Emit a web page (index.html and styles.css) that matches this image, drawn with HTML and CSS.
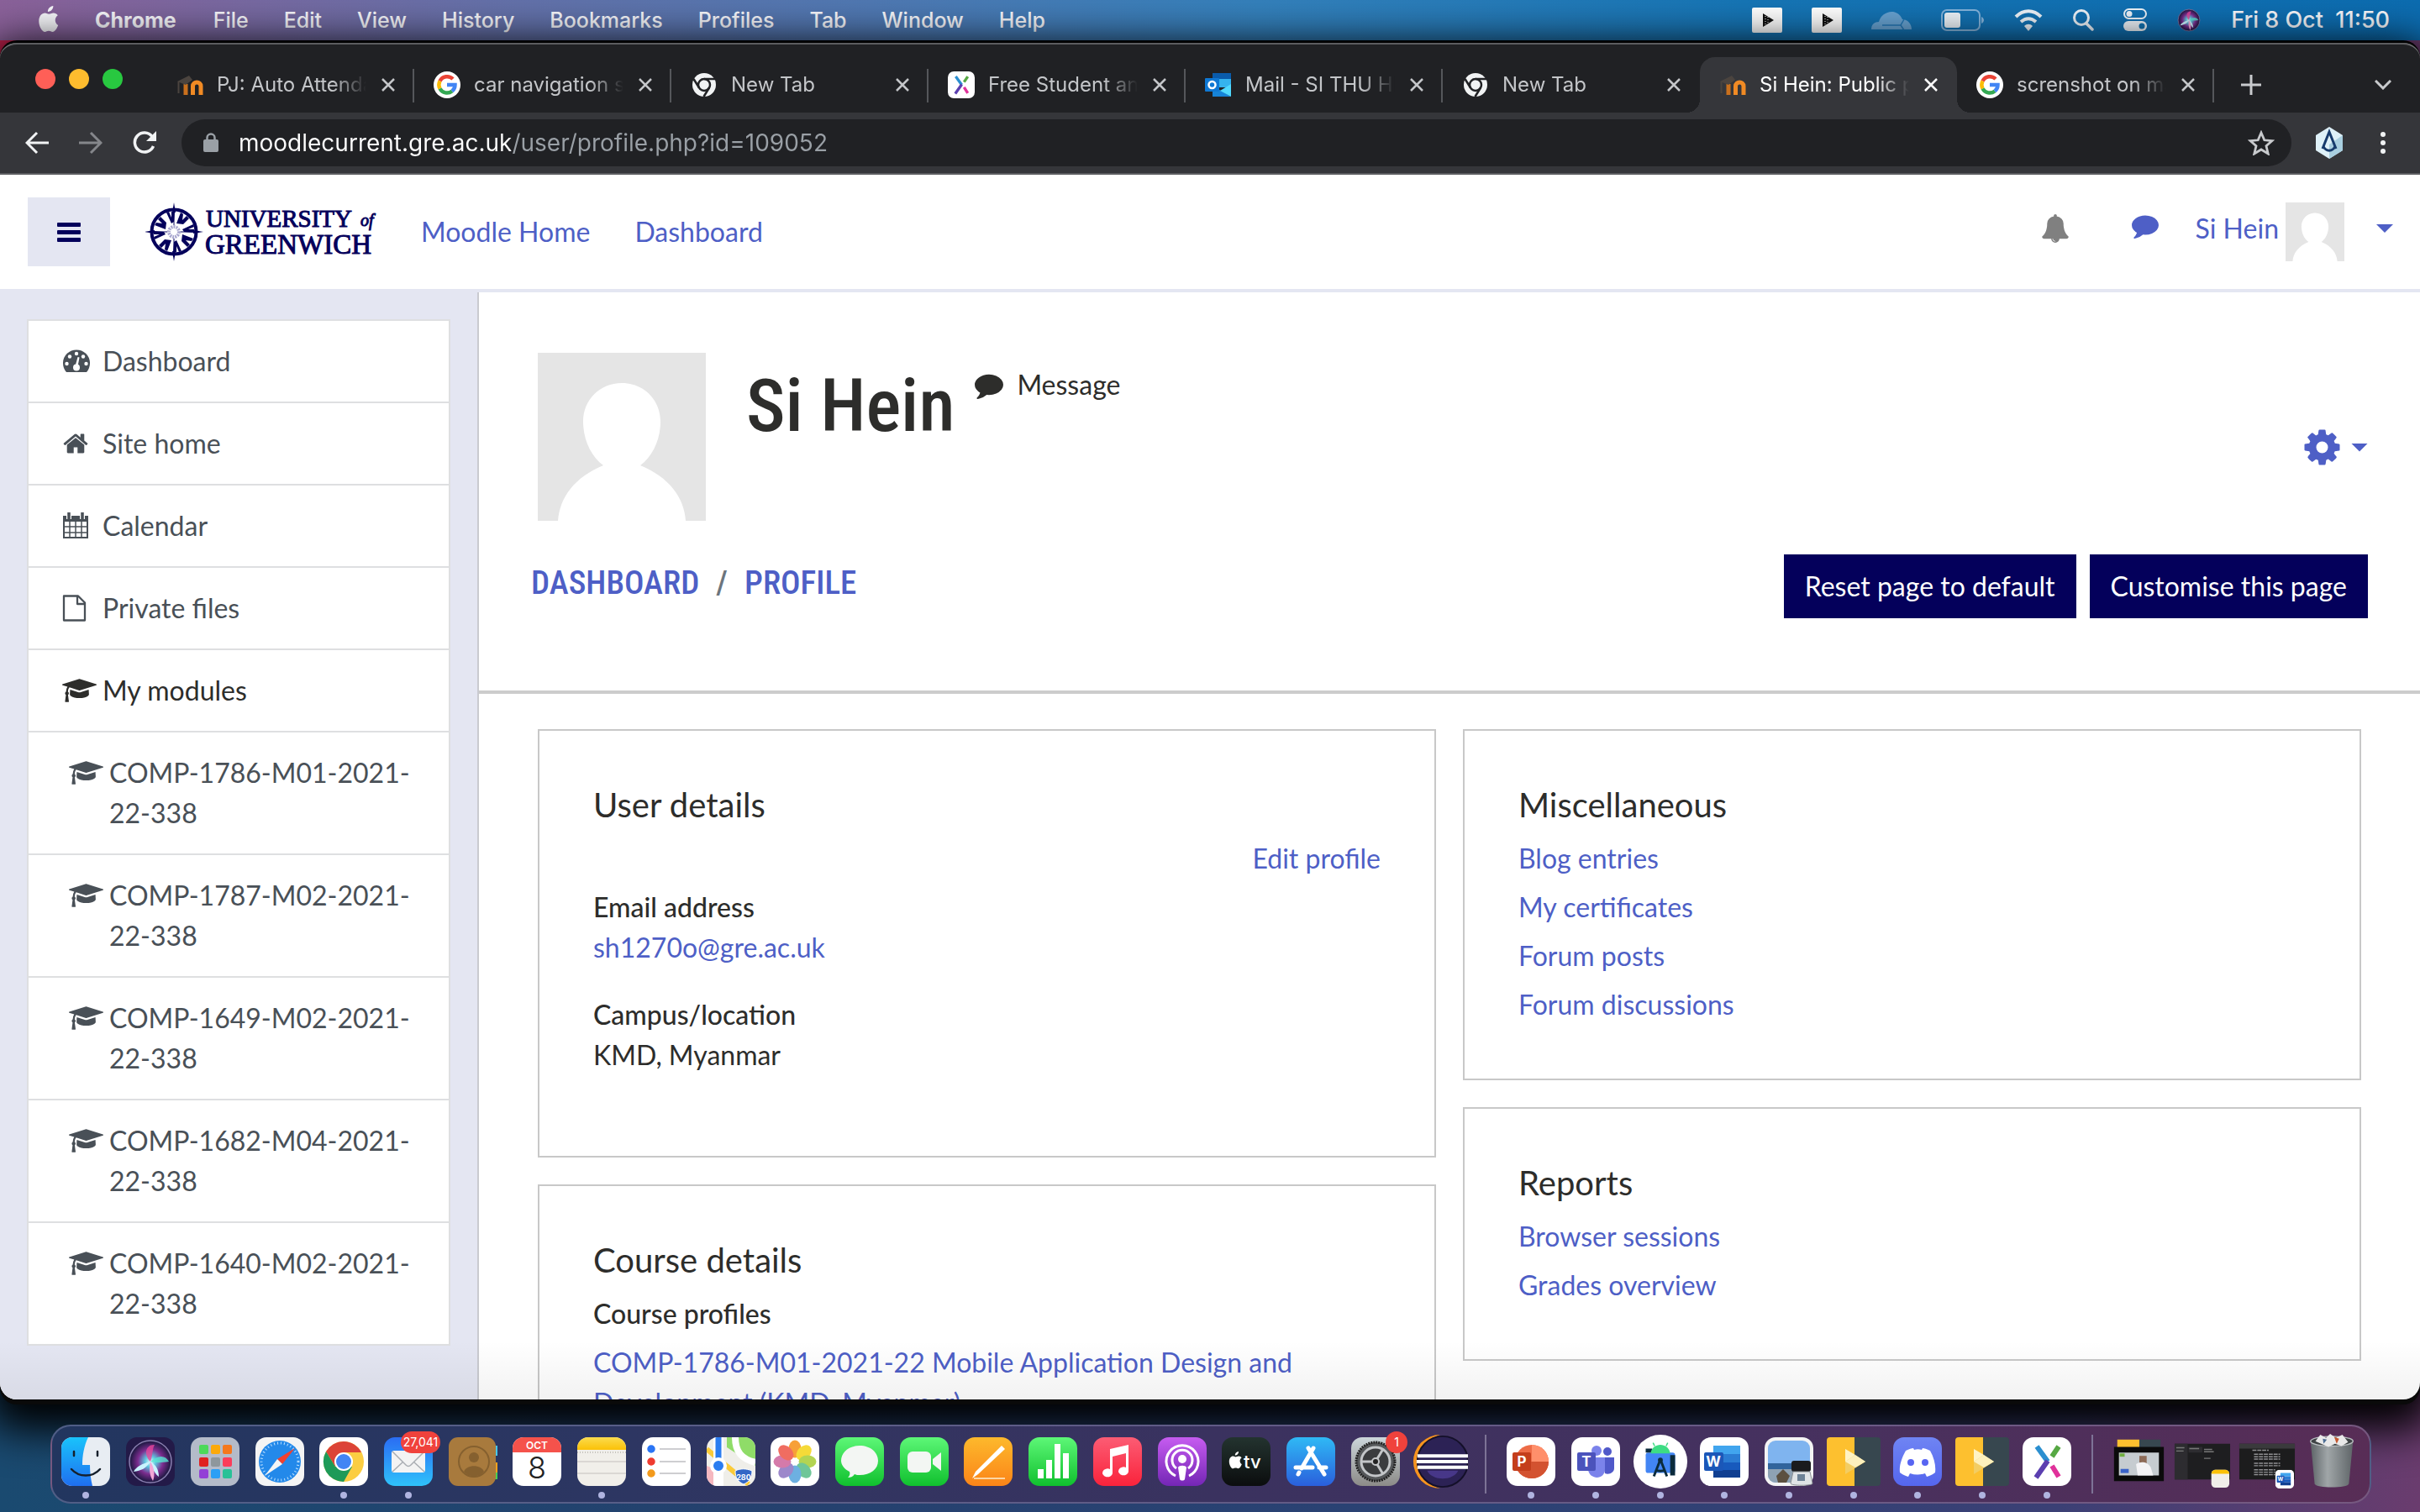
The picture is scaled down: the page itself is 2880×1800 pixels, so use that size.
FILE: index.html
```html
<!DOCTYPE html>
<html lang="en">
<head>
<meta charset="utf-8">
<title>Si Hein: Public profile</title>
<link rel="stylesheet" href="styles.css">
</head>
<body>
<svg class="defs" aria-hidden="true">
  <defs>
    <linearGradient id="g-blue" x1="0" y1="0" x2="0" y2="1"><stop offset="0" stop-color="#19c3fb"/><stop offset="1" stop-color="#1f6ff0"/></linearGradient>
    <linearGradient id="g-mail" x1="0" y1="0" x2="0" y2="1"><stop offset="0" stop-color="#2a6cf3"/><stop offset="1" stop-color="#2fc2fb"/></linearGradient>
    <linearGradient id="g-store" x1="0" y1="0" x2="0" y2="1"><stop offset="0" stop-color="#2fb9f5"/><stop offset="1" stop-color="#2a5fdc"/></linearGradient>
    <linearGradient id="g-green" x1="0" y1="0" x2="0" y2="1"><stop offset="0" stop-color="#5df777"/><stop offset="1" stop-color="#10c02e"/></linearGradient>
    <linearGradient id="g-orange" x1="0" y1="0" x2="0" y2="1"><stop offset="0" stop-color="#fdb92c"/><stop offset="1" stop-color="#fb8418"/></linearGradient>
    <linearGradient id="g-red" x1="0" y1="0" x2="0" y2="1"><stop offset="0" stop-color="#fc5c74"/><stop offset="1" stop-color="#fa233b"/></linearGradient>
    <linearGradient id="g-purple" x1="0" y1="0" x2="0" y2="1"><stop offset="0" stop-color="#c65cf0"/><stop offset="1" stop-color="#7426b5"/></linearGradient>
    <linearGradient id="g-dark" x1="0" y1="0" x2="0" y2="1"><stop offset="0" stop-color="#23332f"/><stop offset="1" stop-color="#0b0d0e"/></linearGradient>
    <linearGradient id="g-gold" x1="0" y1="0" x2="0" y2="1"><stop offset="0" stop-color="#fbdc4e"/><stop offset="1" stop-color="#fbc107"/></linearGradient>
    <linearGradient id="g-grey" x1="0" y1="0" x2="0" y2="1"><stop offset="0" stop-color="#ccd6da"/><stop offset="1" stop-color="#8c8b88"/></linearGradient>
    <linearGradient id="g-discord" x1="0" y1="0" x2="0" y2="1"><stop offset="0" stop-color="#6f84f3"/><stop offset="1" stop-color="#5566ee"/></linearGradient>
    <linearGradient id="g-bin" x1="0" y1="0" x2="1" y2="0"><stop offset="0" stop-color="#5d6467"/><stop offset=".4" stop-color="#a0a6a8"/><stop offset="1" stop-color="#5f6568"/></linearGradient>
    <radialGradient id="g-siri"><stop offset="0" stop-color="#e9fbff"/><stop offset=".25" stop-color="#5fc8e0"/><stop offset=".6" stop-color="#7b2c8e"/><stop offset="1" stop-color="#16173c"/></radialGradient>
    <symbol id="cap" viewBox="0 0 2304 1792"><path d="M1774 836l18 316q4 69-82 128t-235 93.500-323 34.500-323-34.500-235-93.500-82-128l18-316 574 181q22 7 48 7t48-7zm530-324q0 23-22 31l-1120 352q-4 1-10 1t-10-1l-652-206q-43 34-71 111.500t-34 178.500q63 36 63 109 0 69-58 107l58 433q2 14-8 25-9 11-24 11h-192q-15 0-24-11-10-11-8-25l58-433q-58-38-58-107 0-73 65-111 11-207 98-330l-333-104q-22-8-22-31t22-31l1120-352q4-1 10-1t10 1l1120 352q22 8 22 31z"/></symbol>
    <symbol id="comment" viewBox="0 0 1792 1792"><path d="M1792 896q0 174-120 321.500t-326 233-450 85.500q-70 0-145-8-198 175-460 242-49 14-114 22-17 2-30.500-9t-17.500-29v-1q-3-4-.5-12t2-10 4.500-9.500l6-9 7-8.500 8-9q7-8 31-34.500t34.500-38 31-39.500 32.500-51 27-59 26-76q-157-89-247.500-220t-90.500-281q0-130 71-248.500t191-204.500 286-136.500 348-50.500q244 0 450 85.500t326 233 120 321.500z"/></symbol>
    <symbol id="avatar" viewBox="0 0 100 100"><path fill="#e5e5e5" d="M0 0h100v100H0z"/><path fill="#fff" d="M50 18c13 0 23 10 23 23 0 11-5 21-12 26 17 7 26 19 27 33H12c1-14 10-26 27-33-7-5-12-15-12-26 0-13 10-23 23-23z"/></symbol>
    <symbol id="moodle" viewBox="0 0 32 32"><path fill="none" stroke="#f08a24" stroke-width="5" d="M19.500 28V17.500c0-6 9.500-6 9.500 0V28"/><path stroke="#c9701d" stroke-width="5" d="M11 28V15"/><path stroke="#4b443f" stroke-width="2" d="M2.500 26V12"/><path fill="#4b443f" d="M1 12l14-7 4 5-8 6z"/></symbol>
    <symbol id="google" viewBox="0 0 32 32"><circle cx="16" cy="16" r="16" fill="#fff"/><path fill="none" stroke="#ea4335" stroke-width="4.500" d="M7.500 11.500a9.700 9.700 0 0 1 15.500-2.500"/><path fill="none" stroke="#fbbc05" stroke-width="4.500" d="M7.500 20.500a9.700 9.700 0 0 1 0-9"/><path fill="none" stroke="#34a853" stroke-width="4.500" d="M22 23.500a9.700 9.700 0 0 1-14.500-3"/><path fill="none" stroke="#4285f4" stroke-width="4.500" d="M16 16h9.500c0 3-1 5.500-3.500 7.500"/></symbol>
    <symbol id="chromegrey" viewBox="0 0 32 32"><circle cx="16" cy="16" r="14" fill="#f1f3f4"/><circle cx="16" cy="16" r="7" fill="none" stroke="#202124" stroke-width="2.500"/><path fill="none" stroke="#202124" stroke-width="2.500" d="M16 9h13M10 19.500L3.500 9M22 19.500L15.500 30"/></symbol>
    <symbol id="xodo" viewBox="0 0 58 58"><rect width="58" height="58" rx="13" fill="#fff"/><path fill="none" stroke="#2b8fd0" stroke-width="6" d="M17 11l13 18"/><path fill="none" stroke="#5b3fb0" stroke-width="6" d="M30 28L16 48"/><path fill="none" stroke="#56a843" stroke-width="6" d="M43 11l-8 12"/><path fill="none" stroke="#e0319a" stroke-width="6" d="M35 34l8 13"/></symbol>
    <symbol id="close" viewBox="0 0 16 16"><path fill="none" stroke="currentColor" stroke-width="2.500" d="M1 1l14 14M15 1L1 15"/></symbol>
    <symbol id="plex" viewBox="0 0 64 58"><rect width="64" height="58" rx="4" fill="#37474f"/><path fill="#fdc02f" d="M4 0h29v58H4a4 4 0 0 1-4-4V4a4 4 0 0 1 4-4z"/><path fill="#f3cd62" d="M22 14l24 15-24 15z"/><path fill="#fff3c4" d="M22 14l12 7-12 8z"/><path fill="#fdf0bd" d="M34 21l12 8-12 7-12-7z"/></symbol>
    <symbol id="word" viewBox="0 0 58 58"><rect width="58" height="58" rx="13" fill="#fff"/><path fill="#41a5ee" d="M16 10h32v10H16z"/><path fill="#2b7cd3" d="M16 20h32v10H16z"/><path fill="#185abd" d="M16 30h32v9H16z"/><path fill="#103f91" d="M16 39h32v9H16z"/><rect x="5" y="18" width="23" height="22" rx="2" fill="#1b57b8"/><text x="16" y="35" text-anchor="middle" font-size="17" font-weight="700" fill="#fff">W</text></symbol>
    <symbol id="player" viewBox="0 0 36 30"><rect width="36" height="30" rx="2" fill="#fff"/><path fill="#111" d="M13 7l13 8-13 8z"/><path fill="none" stroke="#fff" stroke-dasharray="1 2" d="M16 10v10M19 11v8"/></symbol>
    <symbol id="siri" viewBox="0 0 58 58"><circle cx="29" cy="29" r="25" fill="url(#g-siri)" stroke="#8a7fb0" stroke-width="1.500"/><path fill="#e6469b" opacity=".8" d="M29 29C20 20 24 8 34 9c-3 5-2 12-5 20z"/><path fill="#58e6d2" opacity=".8" d="M29 29c9-8 18-8 22 0-8 1-14 2-22 0z"/><path fill="#c9f4ff" d="M29 29c-9 2-17 6-20 12 9-1 15-4 20-12zM29 29c2 9 6 15 10 18 0-8-3-14-10-18z"/><path fill="#f3a7d6" d="M29 29c-2 8-1 17 3 23 3-8 1-17-3-23z"/></symbol>
    <symbol id="apple" viewBox="0 0 24 30"><path d="M17 0c.3 3.500-2.800 6.700-6 6.500C10.700 3.400 13.700.3 17 0zM22.500 21.500C21 25.500 18.700 29 16.300 29c-1.700 0-2.300-1-4.300-1s-2.700 1-4.300 1C4.500 29 1 22.500 1 17 1 11.500 4.200 8 7.800 8c1.800 0 3.300 1.200 4.400 1.200S15.200 8 17.300 8c1.900 0 3.700 1 4.800 2.600-4 2.600-3.600 8.900.4 10.900z"/></symbol>
  </defs>
</svg>

<header class="menubar">
  <nav class="menus">
    <svg class="apple" width="26" height="32"><use href="#apple"/></svg>
    <button class="menu strong">Chrome</button>
    <button class="menu">File</button>
    <button class="menu">Edit</button>
    <button class="menu">View</button>
    <button class="menu">History</button>
    <button class="menu">Bookmarks</button>
    <button class="menu">Profiles</button>
    <button class="menu">Tab</button>
    <button class="menu">Window</button>
    <button class="menu">Help</button>
  </nav>
  <div class="status">
    <svg width="36" height="30"><use href="#player"/></svg>
    <svg width="36" height="30"><use href="#player"/></svg>
    <svg width="48" height="24" viewBox="0 0 48 24"><path fill="#68a3d2" d="M0 23c0-6 4-9 9-9C12 2 30-4 37 11c6 0 11 5 11 12z"/><path fill="none" stroke="#2377b5" stroke-width="1.500" d="M13 18h22M39 11l-4 7 4 6"/></svg>
    <svg width="52" height="26" viewBox="0 0 52 26"><rect x="1" y="1" width="45" height="24" rx="6" fill="none" stroke="#84b4dc" stroke-width="2"/><rect x="4" y="4" width="19" height="18" rx="3" fill="#eef4fa"/><path fill="#84b4dc" d="M48 9c4 2 4 6 0 8z"/></svg>
    <svg width="34" height="26" viewBox="0 0 34 26"><path fill="none" stroke="#eef4fa" stroke-width="4" d="M2 9c9-9 21-9 30 0M8 15c6-5 12-5 18 0"/><path fill="#eef4fa" d="M12 20c3-3 7-3 10 0l-5 6z"/></svg>
    <svg width="26" height="26" viewBox="0 0 26 26"><circle cx="11" cy="10" r="8.500" fill="none" stroke="#eef4fa" stroke-width="3"/><path stroke="#eef4fa" stroke-width="3.500" stroke-linecap="round" d="M17 17l7 7"/></svg>
    <svg width="28" height="28" viewBox="0 0 28 28"><rect x="1" y="1" width="26" height="11" rx="5.500" fill="none" stroke="#eef4fa" stroke-width="2"/><circle cx="7" cy="6.500" r="3.500" fill="#eef4fa"/><rect y="15" width="28" height="12" rx="6" fill="#eef4fa"/><circle cx="22" cy="21" r="3.500" fill="#1272b1"/></svg>
    <svg width="30" height="30"><use href="#siri"/></svg>
    <span class="clock">Fri 8 Oct&nbsp; 11:50</span>
  </div>
</header>

<div class="window">
  <div class="tabstrip">
    <div class="lights"><i class="light red"></i><i class="light amber"></i><i class="light green"></i></div>
    <div class="tabs">
      <div class="tab"><svg width="32" height="32"><use href="#moodle"/></svg><span class="tab-title">PJ: Auto Attendance</span><button class="close" aria-label="Close"><svg width="16" height="16"><use href="#close"/></svg></button></div>
      <div class="tab"><svg width="32" height="32"><use href="#google"/></svg><span class="tab-title">car navigation system</span><button class="close" aria-label="Close"><svg width="16" height="16"><use href="#close"/></svg></button></div>
      <div class="tab"><svg width="32" height="32"><use href="#chromegrey"/></svg><span class="tab-title">New Tab</span><button class="close" aria-label="Close"><svg width="16" height="16"><use href="#close"/></svg></button></div>
      <div class="tab"><svg width="32" height="32"><use href="#xodo"/></svg><span class="tab-title">Free Student and</span><button class="close" aria-label="Close"><svg width="16" height="16"><use href="#close"/></svg></button></div>
      <div class="tab"><svg width="32" height="32" viewBox="0 0 32 32"><path fill="#0a5bab" d="M9 2h22v10H9z"/><path fill="#35b3ee" d="M9 9h22v10H9z"/><path fill="#1683d8" d="M9 17l22 13H9z"/><path fill="#50d9ff" d="M31 15v15L18 23z"/><rect y="8" width="17" height="16" rx="1" fill="#0f78d4"/><circle cx="8.500" cy="16" r="4" fill="none" stroke="#fff" stroke-width="2.500"/></svg><span class="tab-title">Mail - SI THU HEIN</span><button class="close" aria-label="Close"><svg width="16" height="16"><use href="#close"/></svg></button></div>
      <div class="tab last-plain"><svg width="32" height="32"><use href="#chromegrey"/></svg><span class="tab-title">New Tab</span><button class="close" aria-label="Close"><svg width="16" height="16"><use href="#close"/></svg></button></div>
      <div class="tab active"><svg width="32" height="32"><use href="#moodle"/></svg><span class="tab-title">Si Hein: Public profile</span><button class="close" aria-label="Close"><svg width="16" height="16"><use href="#close"/></svg></button></div>
      <div class="tab"><svg width="32" height="32"><use href="#google"/></svg><span class="tab-title">screnshot on mac</span><button class="close" aria-label="Close"><svg width="16" height="16"><use href="#close"/></svg></button></div>
    </div>
    <button class="new-tab" aria-label="New tab"><svg width="24" height="24" viewBox="0 0 24 24"><path stroke="#c8cacd" stroke-width="3" d="M12 0v24M0 12h24"/></svg></button>
    <button class="tab-search" aria-label="Search tabs"><svg width="20" height="12" viewBox="0 0 20 12"><path fill="none" stroke="#c8cacd" stroke-width="3" d="M1 1l9 9 9-9"/></svg></button>
  </div>

  <div class="toolbar">
    <div class="nav-buttons">
      <button aria-label="Back"><svg width="28" height="28" viewBox="0 0 28 28"><path fill="none" stroke="#f1f3f4" stroke-width="3" d="M28 14H3M14 2L2 14l12 12"/></svg></button>
      <button aria-label="Forward"><svg width="28" height="28" viewBox="0 0 28 28"><path fill="none" stroke="#85878b" stroke-width="3" d="M0 14h25M14 2l12 12-12 12"/></svg></button>
      <button aria-label="Reload"><svg width="28" height="28" viewBox="0 0 28 28"><path fill="none" stroke="#f1f3f4" stroke-width="3.500" d="M24.500 18A11.500 11.500 0 1 1 23 6.500"/><path fill="#f1f3f4" d="M28 0v12H16z"/></svg></button>
    </div>
    <div class="omnibox">
      <svg width="18" height="24" viewBox="0 0 18 24"><rect y="8" width="18" height="15" rx="2" fill="#9aa0a6"/><path fill="none" stroke="#9aa0a6" stroke-width="2.500" d="M4.500 9V6a4.500 4.500 0 0 1 9 0v3"/></svg>
      <input class="url" type="text" aria-label="Address" value="moodlecurrent.gre.ac.uk/user/profile.php?id=109052">
      <button aria-label="Bookmark"><svg width="32" height="30" viewBox="0 0 32 30"><path fill="none" stroke="#c8cacd" stroke-width="2.800" d="M16 3l3.800 8.800 9.200.8-7 6.200 2.200 9.200L16 23l-8.200 5L10 18.800l-7-6.200 9.200-.8z"/></svg></button>
    </div>
    <button aria-label="Extension"><svg width="34" height="40" viewBox="0 0 34 40"><path fill="#dff1f8" d="M17 1l16 10v18L17 39 1 29V11z"/><path fill="#a9cfe0" d="M33 11v18L17 39V22z"/><path fill="none" stroke="#173b6c" stroke-width="3" d="M9 27l8-20 8 20M10 24c3 7 11 7 14 0"/></svg></button>
    <button aria-label="More"><svg width="6" height="28" viewBox="0 0 6 28"><circle cx="3" cy="4" r="3" fill="#f1f3f4"/><circle cx="3" cy="14" r="3" fill="#f1f3f4"/><circle cx="3" cy="24" r="3" fill="#f1f3f4"/></svg></button>
  </div>

  <div class="site">
    <header class="site-header">
      <button class="burger" aria-label="Side panel"><i></i><i></i><i></i></button>
      <a class="logo" href="#" aria-label="University of Greenwich">
        <svg width="276" height="72" viewBox="0 0 276 72">
          <g fill="#04005b" transform="translate(34 36)">
            <circle r="26.500" fill="none" stroke="#04005b" stroke-width="4"/>
            <path d="M0-35l2 12h-4zM0 35l2-12h-4zM-35 0l12 2v-4zM35 0l-12 2v-4z"/>
            <path stroke="#04005b" d="M0-30v22M0 30V8M-30 0h22M30 0H8"/>
            <g id="ray"><path d="M3-10l5-13 3 2-1 7 5-5 3 3-7 7zM10-3l13-6 1 3-7 3 7 0v4l-12-1z"/></g>
            <use href="#ray" transform="rotate(90)"/><use href="#ray" transform="rotate(180)"/><use href="#ray" transform="rotate(270)"/>
            <circle r="6" fill="#fff" stroke="#a9a7cf" stroke-width="4" stroke-dasharray="2 1"/>
          </g>
          <text class="logo-text" x="72" y="30" font-size="29">UNIVERSITY</text>
          <text class="logo-text logo-of" x="256" y="29" font-size="20">of</text>
          <text class="logo-text" x="71" y="62" font-size="33">GREENWICH</text>
        </svg>
      </a>
      <nav class="site-nav"><a href="#">Moodle Home</a><a href="#">Dashboard</a></nav>
      <div class="user-area">
        <button class="bell" aria-label="Notifications"><svg width="34" height="34" viewBox="0 0 1792 1792"><path fill="#808080" d="M912 1696q0-16-16-16-59 0-101.500-42.500t-42.500-101.500q0-16-16-16t-16 16q0 73 51.500 124.500t124.500 51.500q16 0 16-16zm816-288q0 52-38 90t-90 38h-448q0 106-75 181t-181 75-181-75-75-181h-448q-52 0-90-38t-38-90q50-42 91-88t85-119.500 74.500-158.500 50-206 19.500-260q0-152 117-282.500t307-158.500q-8-19-8-39 0-40 28-68t68-28 68 28 28 68q0 20-8 39 190 28 307 158.500t117 282.500q0 139 19.500 260t50 206 74.500 158.500 85 119.500 91 88z"/></svg></button>
        <button class="chat" aria-label="Messages"><svg width="32" height="32"><use href="#comment"/></svg></button>
        <a class="user-link" href="#">Si Hein<svg width="70" height="70"><use href="#avatar"/></svg></a>
        <button class="caret" aria-label="User menu"></button>
      </div>
    </header>

    <div class="site-body">
      <aside class="drawer">
        <nav class="drawer-list">
          <a href="#"><svg width="34" height="32" viewBox="0 0 34 32"><path d="M5 29a16 16 0 1 1 24 0z"/><g fill="#fff"><circle cx="5.500" cy="19" r="2.200"/><circle cx="9" cy="10.500" r="2.200"/><circle cx="17" cy="7" r="2.200"/><circle cx="25" cy="10.500" r="2.200"/><circle cx="28.500" cy="19" r="2.200"/><circle cx="17" cy="23.500" r="4"/><path d="M15.500 22l3-11 2 .5-2 11z"/></g></svg><span>Dashboard</span></a>
          <a href="#"><svg width="32" height="32" viewBox="0 0 1792 1792"><path d="M1472 992v480q0 26-19 45t-45 19h-384v-384h-256v384h-384q-26 0-45-19t-19-45v-480q0-1 .5-3t.5-3l575-474 575 474q1 2 1 6zm223-69l-62 74q-8 9-21 11h-3q-13 0-21-7l-692-577-692 577q-12 8-24 7-13-2-21-11l-62-74q-8-10-7-23.500t11-21.500l719-599q32-26 76-26t76 26l244 204v-195q0-14 9-23t23-9h192q14 0 23 9t9 23v408l219 182q10 8 11 21.500t-7 23.500z"/></svg><span>Site home</span></a>
          <a href="#"><svg width="32" height="32" viewBox="0 0 32 32"><path fill="none" stroke="currentColor" stroke-width="2" d="M2 6h28v24H2z"/><path d="M1 4h30v7H1z"/><path fill="none" stroke="currentColor" stroke-width="1.500" d="M9 11v19M16 11v19M23 11v19M2 17h28M2 24h28"/><path stroke="#fff" stroke-width="6" d="M8 2v6M24 2v6"/><path stroke="currentColor" stroke-width="3.500" d="M8 0v8M24 0v8"/></svg><span>Calendar</span></a>
          <a href="#"><svg width="30" height="32" viewBox="0 0 30 32"><path fill="none" stroke="currentColor" stroke-width="2.300" stroke-linejoin="round" d="M2 1.500h17l8 8v21H2zM18 1.500V11h9"/></svg><span>Private files</span></a>
          <a class="current" href="#"><svg width="41" height="32"><use href="#cap"/></svg><span>My modules</span></a>
          <a class="module" href="#"><svg width="41" height="32"><use href="#cap"/></svg><span>COMP-1786-M01-2021-22-338</span></a>
          <a class="module" href="#"><svg width="41" height="32"><use href="#cap"/></svg><span>COMP-1787-M02-2021-22-338</span></a>
          <a class="module" href="#"><svg width="41" height="32"><use href="#cap"/></svg><span>COMP-1649-M02-2021-22-338</span></a>
          <a class="module" href="#"><svg width="41" height="32"><use href="#cap"/></svg><span>COMP-1682-M04-2021-22-338</span></a>
          <a class="module" href="#"><svg width="41" height="32"><use href="#cap"/></svg><span>COMP-1640-M02-2021-22-338</span></a>
        </nav>
      </aside>

      <main class="main">
        <section class="profile-head">
          <div class="profile-row">
            <svg class="portrait" width="200" height="200"><use href="#avatar"/></svg>
            <h1>Si Hein</h1>
            <a class="message" href="#"><svg width="34" height="34"><use href="#comment"/></svg>Message</a>
            <button class="gear" aria-label="Actions"><svg width="49" height="49" viewBox="0 0 1792 1792"><path d="M1152 896q0-106-75-181t-181-75-181 75-75 181 75 181 181 75 181-75 75-181zm512-109v222q0 12-8 23t-20 13l-185 28q-19 54-39 91 35 50 107 138 10 12 10 25t-9 23q-27 37-99 108t-94 71q-12 0-26-9l-138-108q-44 23-91 38-16 136-29 186-7 28-36 28h-222q-14 0-24.500-8.500t-11.500-21.500l-28-184q-49-16-90-37l-141 107q-10 9-25 9-14 0-25-11-126-114-165-168-7-10-7-23 0-12 8-23 15-21 51-66.500t54-70.500q-27-50-41-99l-183-27q-13-2-21-12.500t-8-23.500v-222q0-12 8-23t19-13l186-28q14-46 39-92-40-57-107-138-10-12-10-24 0-10 9-23 26-36 98.500-107.500t94.500-71.500q13 0 26 10l138 107q44-23 91-38 16-136 29-186 7-28 36-28h222q14 0 24.500 8.500t11.500 21.500l28 184q49 16 90 37l142-107q9-9 24-9 13 0 25 10 129 119 165 170 7 8 7 22 0 12-8 23-15 21-51 66.500t-54 70.500q26 50 41 98l183 28q13 2 21 12.500t8 23.500z"/></svg><i class="caret"></i></button>
          </div>
          <div class="crumb-row">
            <nav class="crumbs"><a href="#">DASHBOARD</a><span>/</span><a href="#">PROFILE</a></nav>
            <div class="actions"><button class="btn">Reset page to default</button><button class="btn">Customise this page</button></div>
          </div>
        </section>
        <div class="cards">
          <div class="col">
            <section class="card">
              <h2>User details</h2>
              <a class="edit" href="#">Edit profile</a>
              <dl><dt>Email address</dt><dd><a href="#">sh1270o@gre.ac.uk</a></dd></dl>
              <dl><dt>Campus/location</dt><dd>KMD, Myanmar</dd></dl>
            </section>
            <section class="card">
              <h2>Course details</h2>
              <dl class="spaced"><dt>Course profiles</dt><dd><a href="#">COMP-1786-M01-2021-22 Mobile Application Design and Development (KMD, Myanmar)</a></dd></dl>
            </section>
          </div>
          <div class="col">
            <section class="card">
              <h2>Miscellaneous</h2>
              <ul><li><a href="#">Blog entries</a></li><li><a href="#">My certificates</a></li><li><a href="#">Forum posts</a></li><li><a href="#">Forum discussions</a></li></ul>
            </section>
            <section class="card">
              <h2>Reports</h2>
              <ul><li><a href="#">Browser sessions</a></li><li><a href="#">Grades overview</a></li></ul>
            </section>
          </div>
        </div>
      </main>
    </div>
  </div>
</div>

<footer class="dock">
  <button class="app running" aria-label="Finder"><svg viewBox="0 0 58 58"><rect width="58" height="58" rx="13" fill="#e8edf3"/><path fill="url(#g-blue)" d="M13 0h19c-5 10-7 22-7 33h9c0 9 1 17 3 25H13A13 13 0 0 1 0 45V13A13 13 0 0 1 13 0z"/><path fill="none" stroke="#16202c" stroke-width="2.500" stroke-linecap="round" d="M15 17v5M43 17v5M12 38c9 10 25 10 34 0"/></svg></button>
  <button class="app" aria-label="Siri"><svg viewBox="0 0 58 58"><rect width="58" height="58" rx="13" fill="#231a48"/><use href="#siri"/></svg></button>
  <button class="app" aria-label="Launchpad"><svg viewBox="0 0 58 58"><rect width="58" height="58" rx="13" fill="#b4bbc9"/><g><rect x="10" y="9" width="11" height="11" rx="2" fill="#4cd95a"/><rect x="24" y="9" width="11" height="11" rx="2" fill="#fba90b"/><rect x="38" y="9" width="11" height="11" rx="2" fill="#f5781d"/><rect x="10" y="24" width="11" height="11" rx="2" fill="#e02020"/><rect x="24" y="24" width="11" height="11" rx="2" fill="#8e979c"/><rect x="38" y="24" width="11" height="11" rx="2" fill="#fb3d5a"/><rect x="10" y="38" width="11" height="11" rx="2" fill="#9341d6"/><rect x="24" y="38" width="11" height="11" rx="2" fill="#2b9ff5"/><rect x="38" y="38" width="11" height="11" rx="2" fill="#29c197"/></g></svg></button>
  <button class="app" aria-label="Safari"><svg viewBox="0 0 58 58"><rect width="58" height="58" rx="13" fill="#f4f4f4"/><circle cx="29" cy="29" r="25" fill="#2389ea"/><circle cx="29" cy="29" r="22" fill="none" stroke="#bfe2ff" stroke-width="3" stroke-dasharray="1 3"/><path fill="#f2402f" d="M47 13L26 26l6 6z"/><path fill="#f5f5f5" d="M11 46l15-20 6 6z"/></svg></button>
  <button class="app running" aria-label="Chrome"><svg viewBox="0 0 58 58"><rect width="58" height="58" rx="13" fill="#fff"/><circle cx="29" cy="29" r="24" fill="#fbcd42"/><path fill="#dc4437" d="M29 5a24 24 0 0 1 21 13H29L19 35 8 17A24 24 0 0 1 29 5z"/><path fill="#1d9a58" d="M8 17l11 18 20 0-10 18A24 24 0 0 1 8 17z"/><circle cx="29" cy="29" r="11" fill="#fff"/><circle cx="29" cy="29" r="9" fill="#4285f4"/></svg></button>
  <button class="app running" aria-label="Mail"><svg viewBox="0 0 58 58"><rect width="58" height="58" rx="13" fill="url(#g-mail)"/><rect x="9" y="16" width="40" height="26" rx="3" fill="#f3f3f3"/><path fill="none" stroke="#a9adb2" stroke-width="1.500" d="M10 17l16 16c2 2 4 2 6 0l16-16M10 41l13-12M48 41L35 29"/></svg><span class="badge">27,041</span></button>
  <button class="app" aria-label="Contacts"><svg viewBox="0 0 58 58"><path fill="#48c7e8" d="M52 10h6v12h-6z"/><path fill="#f5a11d" d="M52 30h6v12h-6z"/><path fill="#4bcf52" d="M52 42h6v8h-6z"/><rect width="56" height="58" rx="11" fill="#a87a3d"/><circle cx="30" cy="29" r="18" fill="none" stroke="#85602f" stroke-width="2"/><circle cx="30" cy="24" r="6" fill="#85602f"/><path fill="#85602f" d="M18 41c3-9 21-9 24 0-6 7-18 7-24 0z"/></svg></button>
  <button class="app" aria-label="Calendar"><svg viewBox="0 0 58 58"><rect width="58" height="58" rx="13" fill="#fff"/><path fill="#f5524b" d="M13 0h32a13 13 0 0 1 13 13v5H0v-5A13 13 0 0 1 13 0z"/><text x="29" y="14" text-anchor="middle" font-size="12" font-weight="600" fill="#fff">OCT</text><text x="29" y="49" text-anchor="middle" font-size="36" font-weight="300" fill="#222">8</text></svg></button>
  <button class="app running" aria-label="Notes"><svg viewBox="0 0 58 58"><rect width="58" height="58" rx="13" fill="#f1efea"/><path fill="url(#g-gold)" d="M13 0h32a13 13 0 0 1 13 13v2H0v-2A13 13 0 0 1 13 0z"/><path stroke="#d2d0cb" stroke-width="1.500" d="M0 29h58M0 43h58"/><path stroke="#9b9890" stroke-dasharray="1 2" d="M0 18h58"/></svg></button>
  <button class="app" aria-label="Reminders"><svg viewBox="0 0 58 58"><rect width="58" height="58" rx="13" fill="#fff"/><g stroke-width="1.500"><circle cx="11" cy="14" r="4" fill="#2a75f5" stroke="#2a75f5"/><circle cx="11" cy="29" r="4" fill="#ef3b30" stroke="#ef3b30"/><circle cx="11" cy="43" r="4" fill="#f39a1c" stroke="#f39a1c"/><path stroke="#bfbfc2" d="M21 14h31M21 29h31M21 43h31"/></g></svg></button>
  <button class="app" aria-label="Maps"><svg viewBox="0 0 58 58"><clipPath id="maps-clip"><rect width="58" height="58" rx="13"/></clipPath><g clip-path="url(#maps-clip)"><rect width="58" height="58" fill="#efeee9"/><path fill="#8fdc68" d="M24 0h34v34L24 12z"/><path fill="none" stroke="#fff" stroke-width="8" d="M34 0c0 18 8 26 24 30"/><path fill="#f5b8c0" d="M0 34l10 4v20H0z"/><path fill="none" stroke="#fbcb38" stroke-width="6" d="M0 14l50 42"/><path stroke="#fff" stroke-width="12" d="M14 0v58"/><path stroke="#2b7df0" stroke-width="7" d="M14 0v32"/><circle cx="14" cy="34" r="8" fill="#2b7df0" stroke="#fff" stroke-width="4"/></g><path fill="#3367c6" stroke="#fff" d="M34 40c6-3 13-3 20 0 0 8-3 13-10 16-7-3-10-8-10-16z"/><text x="44" y="51" text-anchor="middle" font-size="9" font-weight="700" fill="#fff">280</text></svg></button>
  <button class="app" aria-label="Photos"><svg viewBox="0 0 58 58"><rect width="58" height="58" rx="13" fill="#fff"/><g transform="translate(29 29)" opacity=".88"><ellipse cy="-15" rx="7.500" ry="10.500" fill="#f7941d"/><ellipse cy="-15" rx="7.500" ry="10.500" fill="#f5d51d" transform="rotate(45)"/><ellipse cy="-15" rx="7.500" ry="10.500" fill="#a9cf3b" transform="rotate(90)"/><ellipse cy="-15" rx="7.500" ry="10.500" fill="#5cbf8a" transform="rotate(135)"/><ellipse cy="-15" rx="7.500" ry="10.500" fill="#5aa6dd" transform="rotate(180)"/><ellipse cy="-15" rx="7.500" ry="10.500" fill="#8f78c4" transform="rotate(225)"/><ellipse cy="-15" rx="7.500" ry="10.500" fill="#d0689f" transform="rotate(270)"/><ellipse cy="-15" rx="7.500" ry="10.500" fill="#ef5a4c" transform="rotate(315)"/></g></svg></button>
  <button class="app" aria-label="Messages"><svg viewBox="0 0 58 58"><rect width="58" height="58" rx="13" fill="url(#g-green)"/><path fill="#f3f6f3" d="M29 10c13 0 22 8 22 18s-9 17-22 17c-2 0-4 0-6-1-2 3-5 4-8 4 2-2 3-4 2-7-6-3-10-8-10-13 0-10 9-18 22-18z"/></svg></button>
  <button class="app" aria-label="FaceTime"><svg viewBox="0 0 58 58"><rect width="58" height="58" rx="13" fill="url(#g-green)"/><rect x="9" y="17" width="28" height="25" rx="6" fill="#f3f6f3"/><path fill="#f3f6f3" d="M39 26l10-8v22l-10-8z"/></svg></button>
  <button class="app" aria-label="Pages"><svg viewBox="0 0 58 58"><rect width="58" height="58" rx="13" fill="url(#g-orange)"/><path fill="#fff" d="M45 10l4 4-32 30-7 5 4-8z"/><path stroke="#fcd6a4" stroke-width="2" d="M12 49h37"/></svg></button>
  <button class="app" aria-label="Numbers"><svg viewBox="0 0 58 58"><rect width="58" height="58" rx="13" fill="url(#g-green)"/><path fill="#fff" d="M11 38h7v11h-7zM21 27h7v22h-7zM31 8h7v41h-7zM41 19h7v30h-7z"/></svg></button>
  <button class="app" aria-label="Music"><svg viewBox="0 0 58 58"><rect width="58" height="58" rx="13" fill="url(#g-red)"/><path fill="#fff" d="M20 14l22-5v32a6 5 0 1 1-3-5V19l-16 4v20a6 5 0 1 1-3-5z"/></svg></button>
  <button class="app" aria-label="Podcasts"><svg viewBox="0 0 58 58"><rect width="58" height="58" rx="13" fill="url(#g-purple)"/><g fill="none" stroke="#fff" stroke-width="3"><path d="M21 46a19 19 0 1 1 16 0M22 37a12 12 0 1 1 14 0"/></g><circle cx="29" cy="26" r="5" fill="#fff"/><path fill="#fff" d="M24 36c1-3 9-3 10 0l-2 14c-1 2-5 2-6 0z"/></svg></button>
  <button class="app" aria-label="TV"><svg viewBox="0 0 58 58"><rect width="58" height="58" rx="13" fill="url(#g-dark)"/><use href="#apple" x="8" y="17" width="17" height="21" fill="#fff"/><text x="26" y="37" font-size="22" font-weight="500" fill="#fff">tv</text></svg></button>
  <button class="app" aria-label="App Store"><svg viewBox="0 0 58 58"><rect width="58" height="58" rx="13" fill="url(#g-store)"/><path fill="none" stroke="#fff" stroke-width="5" stroke-linecap="round" d="M32 13L18 37M26 13l19 31M11 36h20M39 36h8M15 42l-1 2"/></svg></button>
  <button class="app" aria-label="System Preferences"><svg viewBox="0 0 58 58"><rect width="58" height="58" rx="13" fill="url(#g-grey)"/><circle cx="29" cy="29" r="23" fill="#55585a" stroke="#222" stroke-width="3" stroke-dasharray="2 1"/><circle cx="29" cy="29" r="17" fill="#3a3c3e" stroke="#c3c6c8" stroke-width="3"/><path stroke="#c3c6c8" stroke-width="3" d="M29 29H12M29 29l9-15M29 29l9 15"/><circle cx="29" cy="29" r="4" fill="#222" stroke="#c3c6c8" stroke-width="2"/></svg><span class="badge round">1</span></button>
  <button class="app" aria-label="Eclipse"><svg class="large" viewBox="0 0 70 66"><path fill="#f7941e" d="M36 0a33 33 0 0 0 0 66C16 60 12 44 12 33S18 6 36 0z"/><circle cx="39" cy="33" r="31" fill="#2c2255" stroke="#141029" stroke-width="2"/><path fill="#fff" d="M8 24h62v4H8zM7 31h63v4H7zM8 38h62v4H8z"/><path fill="#473788" d="M20 44h38c-6 13-32 13-38 0z"/></svg></button>
  <i class="divider"></i>
  <button class="app running" aria-label="PowerPoint"><svg viewBox="0 0 58 58"><rect width="58" height="58" rx="13" fill="#fff"/><circle cx="30" cy="29" r="20" fill="#ed6c47"/><path fill="#ff8f6b" d="M30 9a20 20 0 0 1 20 20H30z"/><path fill="#d35230" d="M50 29a20 20 0 0 1-40 0z"/><rect x="7" y="18" width="22" height="22" rx="2" fill="#c43e1c"/><text x="18" y="35" text-anchor="middle" font-size="17" font-weight="700" fill="#fff">P</text></svg></button>
  <button class="app running" aria-label="Teams"><svg viewBox="0 0 58 58"><rect width="58" height="58" rx="13" fill="#fff"/><circle cx="30" cy="16" r="6" fill="#7b83eb"/><circle cx="43" cy="17" r="5" fill="#5059c9"/><path fill="#5059c9" d="M36 24h15v13c0 5-6 8-11 6z"/><path fill="#7b83eb" d="M20 24h20v14c0 13-18 13-20 1z"/><rect x="7" y="18" width="22" height="22" rx="2" fill="#4b53bc"/><text x="18" y="35" text-anchor="middle" font-size="17" font-weight="700" fill="#fff">T</text></svg></button>
  <button class="app running" aria-label="Android Studio"><svg class="large" viewBox="0 0 70 66"><circle cx="35" cy="33" r="33" fill="#fff"/><rect x="17" y="22" width="36" height="25" rx="3" fill="#4285f4"/><path fill="#0b2b3c" d="M17 17h8v5h-8zM47 25h6v25h-6z"/><path fill="#3ddc84" d="M23 23c2-14 22-14 24 0z"/><path stroke="#3ddc84" stroke-width="1.500" d="M28 14l-2-4M42 14l2-4"/><path fill="none" stroke="#0b2b3c" stroke-width="3" d="M27 51l7-18h2l7 18M29 43c4 2 8 2 12 0"/><circle cx="35" cy="31" r="3" fill="#0b2b3c"/></svg></button>
  <button class="app running" aria-label="Word"><svg><use href="#word"/></svg></button>
  <button class="app running" aria-label="Preview"><svg viewBox="0 0 58 58"><rect width="58" height="58" rx="13" fill="#f4f4f4"/><rect x="4" y="4" width="50" height="50" rx="9" fill="#7fb4ef"/><path fill="#31649c" d="M4 31h50v8H4z"/><path fill="#8ea2b4" d="M4 38h50v7a9 9 0 0 1-9 9H13a9 9 0 0 1-9-9z"/><path fill="#5c5040" d="M14 46l8-8 8 8-4 8H16z"/><rect x="32" y="28" width="23" height="13" rx="3" fill="#1a1b1d"/><path fill="#dfe4e6" stroke="#8b9194" d="M34 41h20l3 14c0 3-26 3-26 0z"/><path fill="#6c8296" d="M39 44h9v8h-9z"/></svg></button>
  <button class="app running" aria-label="Player"><svg class="wide" viewBox="0 0 64 58"><use href="#plex"/></svg></button>
  <button class="app running" aria-label="Discord"><svg viewBox="0 0 58 58"><rect width="58" height="58" rx="13" fill="url(#g-discord)"/><path fill="#fff" d="M15 16c4-2 7-3 9-3l1 2c3-1 6-1 9 0l1-2c2 0 5 1 9 3 5 9 7 18 6 26-4 3-7 4-10 5l-2-4c-6 2-12 2-18 0l-2 4c-3-1-6-2-10-5-1-8 2-17 7-26z"/><circle cx="21" cy="30" r="4" fill="#5865f2"/><circle cx="38" cy="30" r="4" fill="#5865f2"/></svg></button>
  <button class="app running" aria-label="Player"><svg class="wide" viewBox="0 0 64 58"><use href="#plex"/></svg></button>
  <button class="app running" aria-label="Xodo"><svg><use href="#xodo"/></svg></button>
  <i class="divider"></i>
  <button class="app" aria-label="Player window"><svg class="large" viewBox="0 0 70 66"><path fill="#fdc02f" d="M9 6h27v12H9z"/><path fill="#37474f" d="M36 6h26v12H36z"/><path fill="#0b0b0b" d="M5 15h61v42H5z"/><path fill="#c6ccd0" d="M11 22h49v28H11z"/><path fill="#8d6b57" d="M36 26h9v9h-9z"/><path fill="#f3f3f5" d="M32 36c6-4 14-3 18 4l3 10H34z"/><path fill="#3a63c8" d="M13 42h10v5H13z"/><path fill="#6fae3d" d="M12 23h6v4h-6z"/></svg></button>
  <button class="app" aria-label="Notes window"><svg class="large" viewBox="0 0 70 66"><path fill="#1e1e20" d="M1 11h68v44H1z"/><path fill="#2d2c30" d="M1 11h16v44H1zM18 15h17v7H18z"/><path stroke="#777" stroke-width="1.500" d="M3 16h10M3 20h9M19 17h12M37 18h10M37 21h12M37 29h8"/><rect x="46" y="43" width="22" height="22" rx="5" fill="#f1efea"/><path fill="#fbc107" d="M51 43h12a5 5 0 0 1 5 5H46a5 5 0 0 1 5-5z"/></svg></button>
  <button class="app" aria-label="Word window"><svg class="large" viewBox="0 0 70 66"><path fill="#1c1c1d" d="M1 11h68v44H1z"/><path fill="#3a3a3c" d="M1 11h68v6H1z"/><path stroke="#8f8f92" stroke-width="1.500" stroke-dasharray="5 1" d="M17 19h20M19 24h32M19 27h32M19 30h32M19 35h32M19 38h32M19 43h26M19 46h26M19 49h26"/><use href="#word" x="45" y="43" width="23" height="23"/></svg></button>
  <button class="app" aria-label="Bin"><svg class="large" viewBox="0 0 70 66"><path fill="url(#g-bin)" d="M9 8h52l-5 52c-1 6-41 6-42 0z"/><ellipse cx="35" cy="8" rx="26" ry="6" fill="#3f4446" stroke="#b9bec0" stroke-width="1.500"/><path fill="#e9e9e9" d="M15 8l6-8 7 4 5-5 7 5 8-4 7 9-8 5-8-3-8 4-9-4z"/><path fill="#c4572e" d="M38 3l6 2-3 6z"/><path fill="#4a6c93" d="M24 5l5 1-4 5z"/></svg></button>
</footer>
</body>
</html>
```
FILE: styles.css
```css
* { box-sizing: border-box; }

body {
  margin: 0;
  height: 100vh;
  overflow: hidden;
  display: grid;
  grid-template-rows: 48px minmax(0, 1fr) auto;
  font-family: Lato, "Open Sans", sans-serif;
  font-size: 32px;
  line-height: 48px;
  color: #2d2d2b;
  background:
    linear-gradient(90deg, #c3224e 0, #c3224e 20%, transparent 40%) 0 48px / 100% 40px no-repeat,
    linear-gradient(90deg, #1a4a70, #24416e 30%, #2b4274 60%, #3b4075 85%, #6a3c6e);
}

button {
  border: 0;
  padding: 0;
  background: none;
  color: inherit;
  font: inherit;
  display: flex;
  align-items: center;
}

a { color: #4e5fc6; text-decoration: none; }
svg { display: block; flex: none; fill: currentColor; }
.defs { position: absolute; width: 0; height: 0; }

/* System menu bar */
.menubar {
  display: flex;
  align-items: center;
  justify-content: space-between;
  padding: 0 36px 0 45px;
  font-family: Inter, sans-serif;
  font-size: 25px;
  font-weight: 500;
  line-height: 32px;
  color: #f8f8fc;
  background: linear-gradient(90deg, #8a6199, #6570a8 20%, #4f78b2 36%, #3480bb 52%, #1675b5 72%, #0c6cb0);
}
.menus, .status { display: flex; align-items: center; }
.menus { gap: 42px; }
.menus svg { margin-top: -3px; }
.menus .strong { font-weight: 700; margin-right: 2px; }
.status { gap: 35px; }
.clock { white-space: nowrap; font-size: 27px; }

/* Browser window */
.window {
  display: flex;
  flex-direction: column;
  overflow: hidden;
  border: 2px solid #000;
  border-width: 3px 0 0;
  border-radius: 20px;
  background: #202124;
  box-shadow: inset 0 2px 0 #6a6b6e, 0 6px 0 #0a0a0a, 0 20px 50px 16px #000;
  position: relative;
}
.tabstrip {
  flex: none;
  display: flex;
  height: 83px;
  padding: 15px 34px 0 42px;
  font-family: Inter, sans-serif;
  font-size: 24px;
  line-height: 32px;
  color: #c4c6c9;
  border-top: 2px solid #5c5d60;
}
.lights { display: flex; gap: 16px; width: 145px; padding-top: 14px; }
.light { width: 24px; height: 24px; border-radius: 50%; }
.red { background: #ff5f57; }
.amber { background: #febc2e; }
.green { background: #28c840; }
.tabs { display: flex; flex: 0 1 2448px; min-width: 0; }
.tab {
  position: relative;
  flex: 1 1 306px;
  min-width: 0;
  display: flex;
  align-items: center;
  padding: 0 23px;
}
.tab::after {
  content: "";
  position: absolute;
  right: 0;
  top: 14px;
  width: 2px;
  height: 40px;
  background: #55575b;
}
.tab.last-plain::after { display: none; }
.tab-title {
  flex: 1;
  min-width: 0;
  margin: 0 18px 0 16px;
  overflow: hidden;
  white-space: nowrap;
  mask-image: linear-gradient(90deg, #000 calc(100% - 40px), transparent);
}
.tab.active { color: #fff; background: #35363a; border-radius: 18px 18px 0 0; }
.tab.active::before, .tab.active::after {
  content: "";
  position: absolute;
  top: auto;
  bottom: 0;
  width: 16px;
  height: 16px;
}
.tab.active::before { left: -16px; background: radial-gradient(circle at 0 0, transparent 16px, #35363a 16px); }
.tab.active::after { right: -16px; background: radial-gradient(circle at 100% 0, transparent 16px, #35363a 16px); }
.new-tab { margin-left: 32px; }
.tab-search { margin-left: auto; }

.toolbar {
  flex: none;
  display: flex;
  align-items: center;
  gap: 28px;
  height: 74px;
  padding: 0 41px 0 30px;
  background: #35363a;
  border-bottom: 2px solid #5c5d60;
}
.toolbar > button:last-child { margin-left: 16px; }
.nav-buttons { display: flex; gap: 36px; padding-right: 2px; }
.omnibox {
  flex: 1;
  display: flex;
  align-items: center;
  height: 56px;
  padding: 0 20px 0 26px;
  border-radius: 28px;
  background: #202124;
}
.url {
  flex: 1;
  min-width: 0;
  margin-left: 24px;
  padding: 0;
  border: 0;
  outline: 0;
  font-family: Inter, sans-serif;
  font-size: 28px;
  line-height: 40px;
  color: transparent;
  background: linear-gradient(90deg, #fff 324px, #9aa0a6 324px);
  background-clip: text;
  -webkit-background-clip: text;
}

/* Site */
.site {
  flex: 1;
  min-height: 0;
  display: flex;
  flex-direction: column;
  background: #fff;
  position: relative;
}
.site::after {
  content: "";
  position: absolute;
  inset: auto 0 0;
  height: 70px;
  background: linear-gradient(transparent, rgba(0, 0, 0, .05));
  pointer-events: none;
}
.site-header {
  flex: none;
  display: flex;
  align-items: center;
  height: 140px;
  padding: 0 32px 0 33px;
  border-bottom: 4px solid #e4e6f2;
}
.burger {
  flex-direction: column;
  justify-content: center;
  gap: 4px;
  width: 98px;
  height: 82px;
  background: #e4e6f2;
}
.burger i { width: 28px; height: 5px; border-radius: 1px; background: #04005b; }
.logo { margin-left: 42px; }
.logo-text { font-family: "Liberation Serif", serif; fill: #04005b; stroke: #04005b; stroke-width: 1px; }
.logo-of { font-style: italic; }
.site-nav { display: flex; gap: 53px; margin-left: 52px; }
.user-area { display: flex; align-items: center; margin-left: auto; padding-bottom: 8px; color: #4e5fc6; }
.bell { margin-right: 74px; }
.chat { margin: 0 44px 8px 0; }
.user-link { display: flex; align-items: center; gap: 8px; }
.user-link svg { margin-top: 8px; }
.caret {
  width: 20px;
  height: 10px;
  background: #4e5fc6;
  clip-path: polygon(0 0, 100% 0, 50% 100%);
}
.user-area .caret { margin-left: 38px; }

.site-body { flex: 1; min-height: 0; display: flex; }
.drawer {
  flex: none;
  width: 570px;
  padding: 32px;
  background: #e4e6f2;
  border-right: 2px solid #c9cad0;
}
.drawer-list { background: #fff; border: 2px solid #dedfe1; border-top: 0; }
.drawer-list a {
  display: flex;
  padding: 24px 40px;
  color: #495057;
  border-top: 2px solid #dedfe1;
}
.drawer-list svg { margin: 8px 0; }
.drawer-list span { margin-left: auto; width: 372px; }
.drawer-list .current { color: #2d2d2b; }
.drawer-list .module { padding: 24px 32px 24px 48px; }

.main { flex: 1; min-width: 0; overflow: hidden; }
.profile-head { padding: 72px 62px 86px; border-bottom: 4px solid #ccc; }
.profile-row { display: flex; align-items: flex-start; }
.portrait { margin-left: 8px; }
h1, .crumbs { font-family: "Roboto Condensed", "Liberation Sans Narrow", sans-serif; font-weight: 500; }
h1 { margin: 0 0 0 48px; font-size: 88px; line-height: 126px; }
.message { display: flex; align-items: center; gap: 16px; margin: 14px 0 0 24px; color: #2d2d2b; }
.gear { gap: 10px; margin: 88px 0 0 auto; color: #4e5fc6; }
.crumb-row { display: flex; align-items: center; justify-content: space-between; margin-top: 40px; }
.crumbs { display: flex; gap: 20px; padding-bottom: 8px; font-size: 39px; color: #6c757d; }
.actions { display: flex; gap: 16px; }
.btn { height: 76px; padding: 0 25px; color: #fff; background: #04005b; }

.cards { display: grid; grid-template-columns: 1fr 1fr; gap: 32px; padding: 42px 70px; }
.col { display: flex; flex-direction: column; gap: 32px; min-width: 0; }
.card { display: flex; flex-direction: column; padding: 64px; border: 2px solid #c8c8c8; }
h2 { margin: 0 0 16px; font-size: 40px; line-height: 48px; font-weight: 400; }
.edit { align-self: flex-end; margin-bottom: 10px; }
dl { margin: 0 0 32px; }
dt { font-weight: 500; }
dd { margin: 0; }
.spaced dd { margin-top: 10px; }
ul { display: grid; gap: 10px; margin: 0; padding: 0; list-style: none; }

/* Dock */
.dock {
  position: relative;
  display: flex;
  height: 94px;
  margin: 30px 58px 10px 60px;
  padding: 0 7px 0 2px;
  border: 2px solid rgba(190, 190, 225, .3);
  border-radius: 24px;
  background: linear-gradient(90deg, #22365f, #2d3662 25%, #3a325f 50%, #46315f 75%, #582d56);
  font-family: Inter, sans-serif;
  line-height: 24px;
}
.app { position: relative; flex: 1; min-width: 0; justify-content: center; align-items: flex-start; padding-top: 13px; }
.app svg { width: 58px; height: 58px; }
.app .wide { width: 64px; }
.app .large { width: 68px; height: 66px; margin-top: -4px; }
.running::after {
  content: "";
  position: absolute;
  left: calc(50% - 4px);
  bottom: 4px;
  width: 8px;
  height: 8px;
  border-radius: 50%;
  background: #b0b4e0;
}
.badge {
  position: absolute;
  top: 6px;
  right: 0;
  height: 26px;
  padding: 0 3px;
  border-radius: 13px;
  font-size: 14px;
  line-height: 26px;
  color: #fff;
  background: #f0423c;
}
.round { width: 26px; padding: 0; text-align: center; }
.divider { flex: none; width: 32px; background: linear-gradient(#7d7396, #7d7396) center / 2px 70px no-repeat; }
```
